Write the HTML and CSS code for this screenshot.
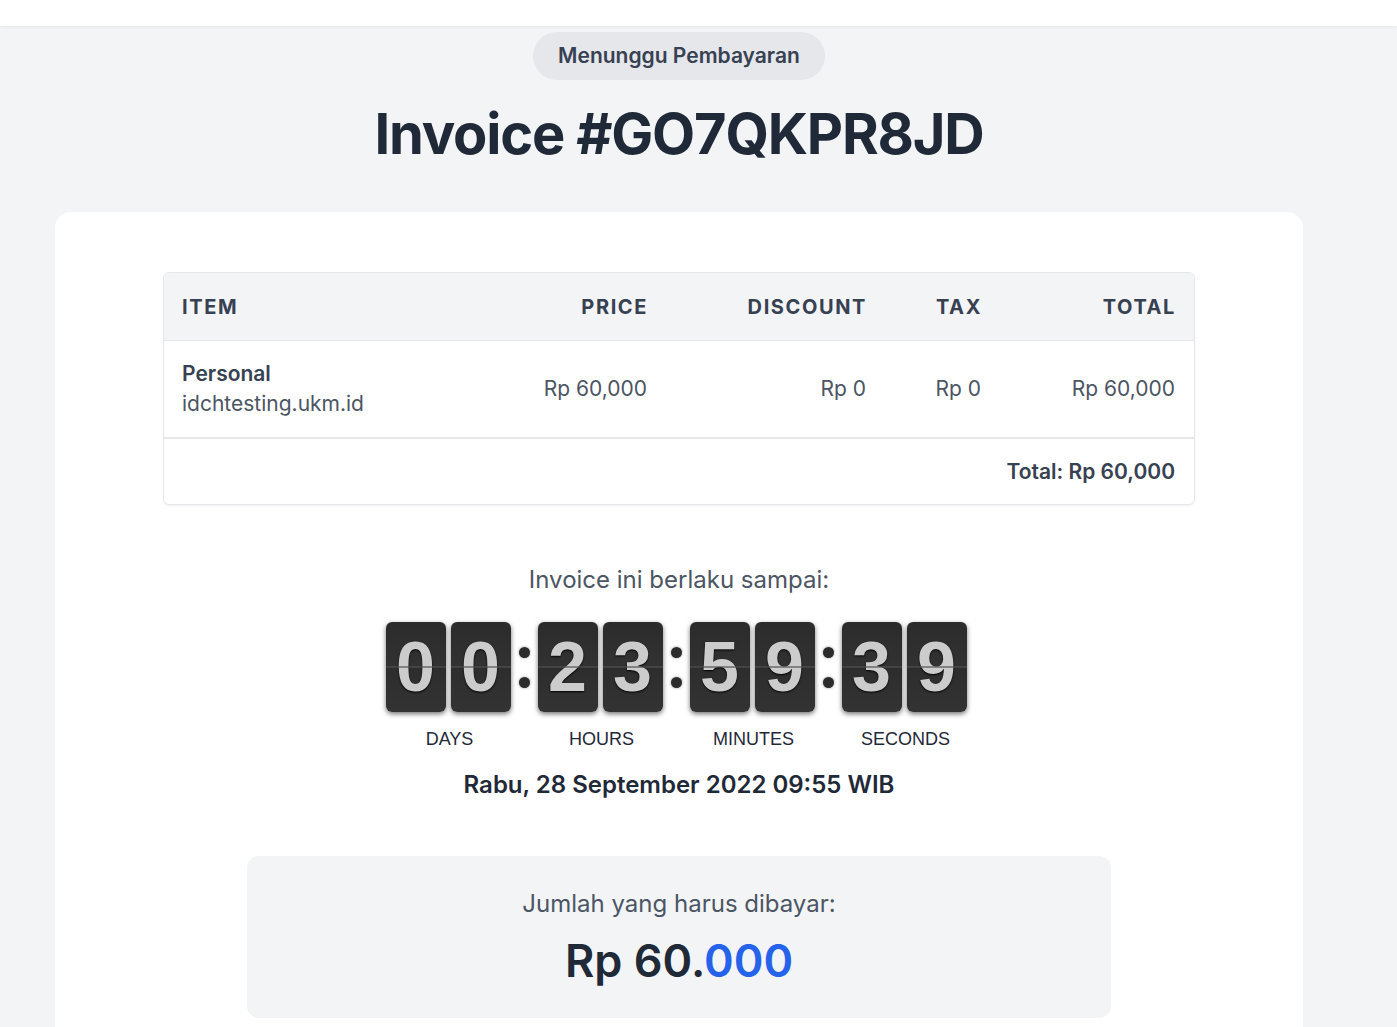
FILE: index.html
```html
<!DOCTYPE html>
<html lang="id">

<head>
    <meta charset="UTF-8">
    <meta name="viewport" content="width=device-width, initial-scale=1.0">
    <title>Invoice #GO7QKPR8JD</title>
    <link rel="stylesheet" href="styles.css">
</head>

<body>
    <div class="topbar"></div>

    <div class="wrap">
        <div class="status">
            <span class="badge">Menunggu Pembayaran</span>
        </div>
        <h1 class="title">Invoice #GO7QKPR8JD</h1>

        <div class="card">
            <table class="items">
                <colgroup>
                    <col class="col-item">
                    <col class="col-price">
                    <col class="col-disc">
                    <col class="col-tax">
                    <col class="col-total">
                </colgroup>
                <thead>
                    <tr>
                        <th>Item</th>
                        <th class="num">Price</th>
                        <th class="num">Discount</th>
                        <th class="num">Tax</th>
                        <th class="num">Total</th>
                    </tr>
                </thead>
                <tbody>
                    <tr>
                        <td>
                            <div class="item-name">Personal</div>
                            <div class="item-domain">idchtesting.ukm.id</div>
                        </td>
                        <td class="num">Rp 60,000</td>
                        <td class="num">Rp 0</td>
                        <td class="num">Rp 0</td>
                        <td class="num">Rp 60,000</td>
                    </tr>
                </tbody>
                <tfoot>
                    <tr>
                        <td colspan="5" class="num grand">Total: Rp 60,000</td>
                    </tr>
                </tfoot>
            </table>

            <p class="valid-until">Invoice ini berlaku sampai:</p>

            <div class="clock">
                <div class="unit">
                    <div class="flips"><span class="flip">0</span><span class="flip">0</span></div>
                    <div class="unit-label">DAYS</div>
                </div>
                <div class="sep"><i></i><i></i></div>
                <div class="unit">
                    <div class="flips"><span class="flip">2</span><span class="flip">3</span></div>
                    <div class="unit-label">HOURS</div>
                </div>
                <div class="sep"><i></i><i></i></div>
                <div class="unit">
                    <div class="flips"><span class="flip">5</span><span class="flip">9</span></div>
                    <div class="unit-label">MINUTES</div>
                </div>
                <div class="sep"><i></i><i></i></div>
                <div class="unit">
                    <div class="flips"><span class="flip">3</span><span class="flip">9</span></div>
                    <div class="unit-label">SECONDS</div>
                </div>
            </div>

            <p class="deadline">Rabu, 28 September 2022 09:55 WIB</p>

            <div class="amount-box">
                <p class="amount-label">Jumlah yang harus dibayar:</p>
                <p class="amount">Rp 60.<span class="amount-code">000</span></p>
            </div>
        </div>
    </div>
</body>

</html>
```

FILE: styles.css
```css
body {
    margin: 0;
    font-family: Inter, "Noto Sans", sans-serif;
    background-color: #f3f4f6;
    color: #1f2937;
}

.topbar {
    height: 26px;
    background-color: #fff;
    box-shadow: 0 1px 3px rgba(0, 0, 0, 0.06);
}

.wrap {
    width: 1248px;
    margin-left: 55px;
    padding-top: 6px;
}

.status {
    text-align: center;
}

.badge {
    display: inline-block;
    height: 48px;
    line-height: 48px;
    padding: 0 25px;
    border-radius: 9999px;
    background-color: #e5e7eb;
    color: #374151;
    font-size: 21px;
    font-weight: 600;
}

.title {
    margin: 24px 0 48px;
    text-align: center;
    font-size: 56px;
    line-height: 60px;
    letter-spacing: -1.2px;
    font-weight: 700;
    color: #1f2937;
}

.card {
    background-color: #fff;
    border-radius: 16px;
    padding: 60px 108px 40px;
}

/* invoice table */
.items {
    width: 100%;
    table-layout: fixed;
    border-collapse: separate;
    border-spacing: 0;
    border: 1px solid #e5e7eb;
    border-radius: 6px;
    overflow: hidden;
    box-shadow: 0 1px 2px rgba(0, 0, 0, 0.06);
    font-size: 21px;
    color: #4b5563;
}

.col-item { width: 360px; }
.col-price { width: 142px; }
.col-disc { width: 219px; }
.col-tax { width: 115px; }
.col-total { width: 194px; }

.items th {
    height: 67px;
    padding: 0 19px 0 18px;
    background-color: #f3f4f6;
    border-bottom: 1px solid #e5e7eb;
    text-align: left;
    text-transform: uppercase;
    letter-spacing: 1.6px;
    font-size: 20px;
    font-weight: 700;
    color: #374151;
}

.items .num {
    text-align: right;
}

.items th.num {
    padding-right: 18px;
}

.items td {
    padding: 18px 19px 18px 18px;
    line-height: 30px;
    vertical-align: middle;
    white-space: nowrap;
}

.item-name {
    font-weight: 600;
    color: #374151;
}

.items tfoot td {
    height: 30px;
    border-top: 2px solid #e5e7eb;
    padding-top: 18px;
    padding-bottom: 17px;
}

.grand {
    font-weight: 600;
    color: #374151;
}

.valid-until {
    margin: 59px 0 26px;
    text-align: center;
    font-size: 24px;
    line-height: 32px;
    color: #4b5563;
}

/* flip countdown */
.clock {
    display: flex;
    justify-content: center;
    padding-right: 6px;
}

.unit {
    display: flex;
    flex-direction: column;
    align-items: center;
}

.flips {
    display: flex;
    gap: 5px;
}

.flip {
    position: relative;
    width: 60px;
    height: 90px;
    border-radius: 6px;
    background: linear-gradient(#2b2b2b, #323232 50%, #2d2d2d 50%, #333);
    box-shadow: 0 2px 5px rgba(0, 0, 0, 0.55);
    text-align: center;
    line-height: 90px;
    font-family: "Liberation Sans", Arial, sans-serif;
    font-size: 70px;
    font-weight: 700;
    color: #ccc;
    text-shadow: 0 1px 2px #000;
}

.flip::after {
    content: "";
    position: absolute;
    left: 0;
    right: 0;
    top: 44px;
    height: 2px;
    background-color: rgba(80, 80, 80, 0.6);
}

.unit-label {
    margin-top: 15px;
    padding-left: 3px;
    font-family: "Liberation Sans", Arial, sans-serif;
    font-size: 18px;
    line-height: 24px;
    color: #1f2937;
}

.sep {
    width: 27px;
    height: 90px;
    display: flex;
    flex-direction: column;
    align-items: center;
    justify-content: center;
    gap: 19px;
}

.sep i {
    width: 11px;
    height: 11px;
    border-radius: 50%;
    background-color: #2b2b2b;
    box-shadow: 0 0 3px rgba(0, 0, 0, 0.4);
}

.deadline {
    margin: 18px 0 55px;
    text-align: center;
    font-size: 24px;
    line-height: 32px;
    font-weight: 600;
    color: #1f2937;
}

.amount-box {
    width: 864px;
    margin: 0 auto;
    padding: 32px 0 33px;
    border-radius: 12px;
    background-color: #f3f4f6;
    text-align: center;
}

.amount-label {
    margin: 0 0 17px;
    font-size: 24px;
    line-height: 32px;
    color: #4b5563;
}

.amount {
    margin: 0;
    font-size: 45px;
    line-height: 48px;
    font-weight: 600;
    color: #1f2937;
}

.amount-code {
    color: #2563eb;
}
```
